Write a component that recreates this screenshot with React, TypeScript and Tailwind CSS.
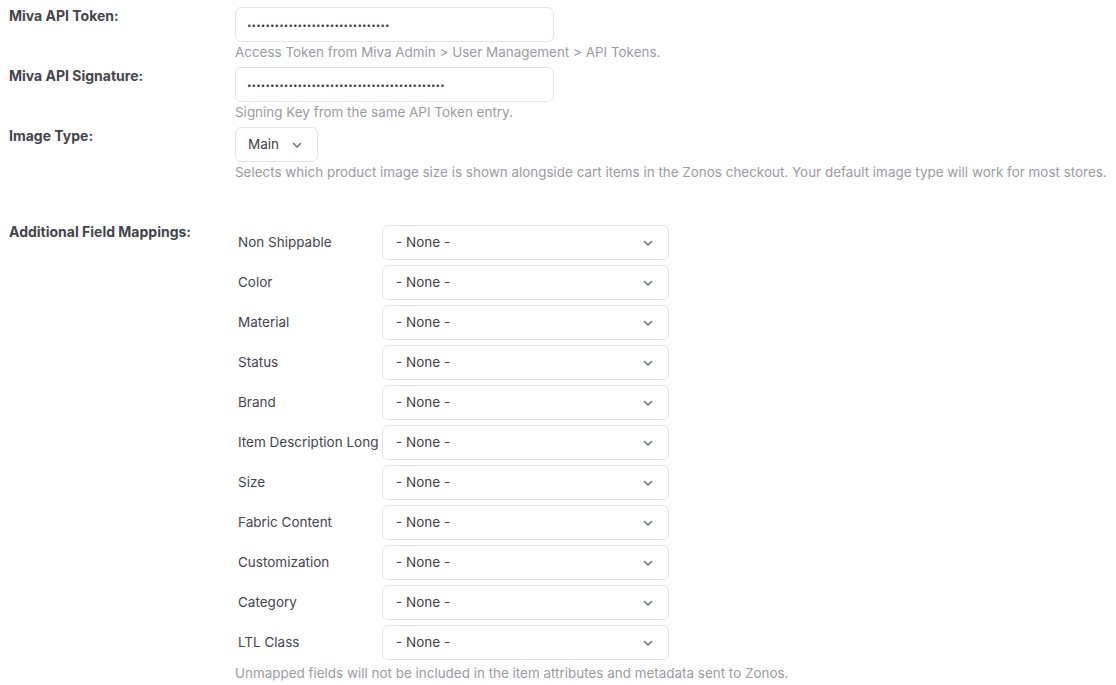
import React from "react";

const Chevron = () => (
  <svg width="12" height="12" viewBox="0 0 12 12" fill="none" className="shrink-0">
    <path d="M2.5 4.5 L6 8 L9.5 4.5" stroke="#6b7280" strokeWidth="1.6" strokeLinecap="round" strokeLinejoin="round" />
  </svg>
);

const mappings = [
  "Non Shippable",
  "Color",
  "Material",
  "Status",
  "Brand",
  "Item Description Long",
  "Size",
  "Fabric Content",
  "Customization",
  "Category",
  "LTL Class",
];

function FieldLabel({ children }: { children: React.ReactNode }) {
  return (
    <div className="w-[226px] shrink-0 text-[14px] font-bold leading-[18px] text-[#45454d]">{children}</div>
  );
}

function Help({ children }: { children: React.ReactNode }) {
  return <div className="whitespace-nowrap text-[13.45px] leading-5 text-[#9b9ba1]">{children}</div>;
}

export default function App() {
  return (
    <div className="min-h-[685px] bg-white pl-[9px] pt-[7px] font-['Inter',sans-serif]">
      <div className="flex mb-[5px]">
        <FieldLabel>Miva API Token:</FieldLabel>
        <div>
          <div className="flex h-[35px] w-[319px] items-center rounded-md border border-[#e4e4e7] pl-[11px] pr-3 text-[8px] tracking-[0.1px] text-[#3f3f46]">
            {"•".repeat(31)}
          </div>
          <Help>Access Token from Miva Admin &gt; User Management &gt; API Tokens.</Help>
        </div>
      </div>
      <div className="flex mb-[5px]">
        <FieldLabel>Miva API Signature:</FieldLabel>
        <div>
          <div className="flex h-[35px] w-[319px] items-center rounded-md border border-[#e4e4e7] pl-[11px] pr-3 text-[8px] tracking-[0.1px] text-[#3f3f46]">
            {"•".repeat(43)}
          </div>
          <Help>Signing Key from the same API Token entry.</Help>
        </div>
      </div>
      <div className="flex">
        <FieldLabel>Image Type:</FieldLabel>
        <div>
          <div className="flex h-[35px] w-[83px] items-center justify-between rounded-md border border-[#e4e4e7] pl-3 pr-[14px] text-[13.5px] text-[#3f3f46]">
            <span>Main</span>
            <Chevron />
          </div>
          <Help>
            Selects which product image size is shown alongside cart items in the Zonos checkout. Your default image type will work for most stores.
          </Help>
        </div>
      </div>
      <div className="mt-[43px] flex">
        <div className="-mt-[2px] w-[226px] shrink-0 text-[14px] font-bold leading-[18px] text-[#45454d]">
          Additional Field Mappings:
        </div>
        <div>
          <div className="flex flex-col gap-[5px]">
            {mappings.map((m) => (
              <div key={m} className="flex items-center">
                <div className="w-[147px] shrink-0 whitespace-nowrap pl-[3px] text-[13.5px] text-[#45454d]">{m}</div>
                <div className="flex h-[35px] w-[287px] items-center justify-between rounded-md border border-[#e4e4e7] pl-[13px] pr-[14px] text-[13.5px] text-[#3f3f46]">
                  <span>- None -</span>
                  <Chevron />
                </div>
              </div>
            ))}
          </div>
          <div className="pt-[3px]">
            <Help>Unmapped fields will not be included in the item attributes and metadata sent to Zonos.</Help>
          </div>
        </div>
      </div>
    </div>
  );
}
